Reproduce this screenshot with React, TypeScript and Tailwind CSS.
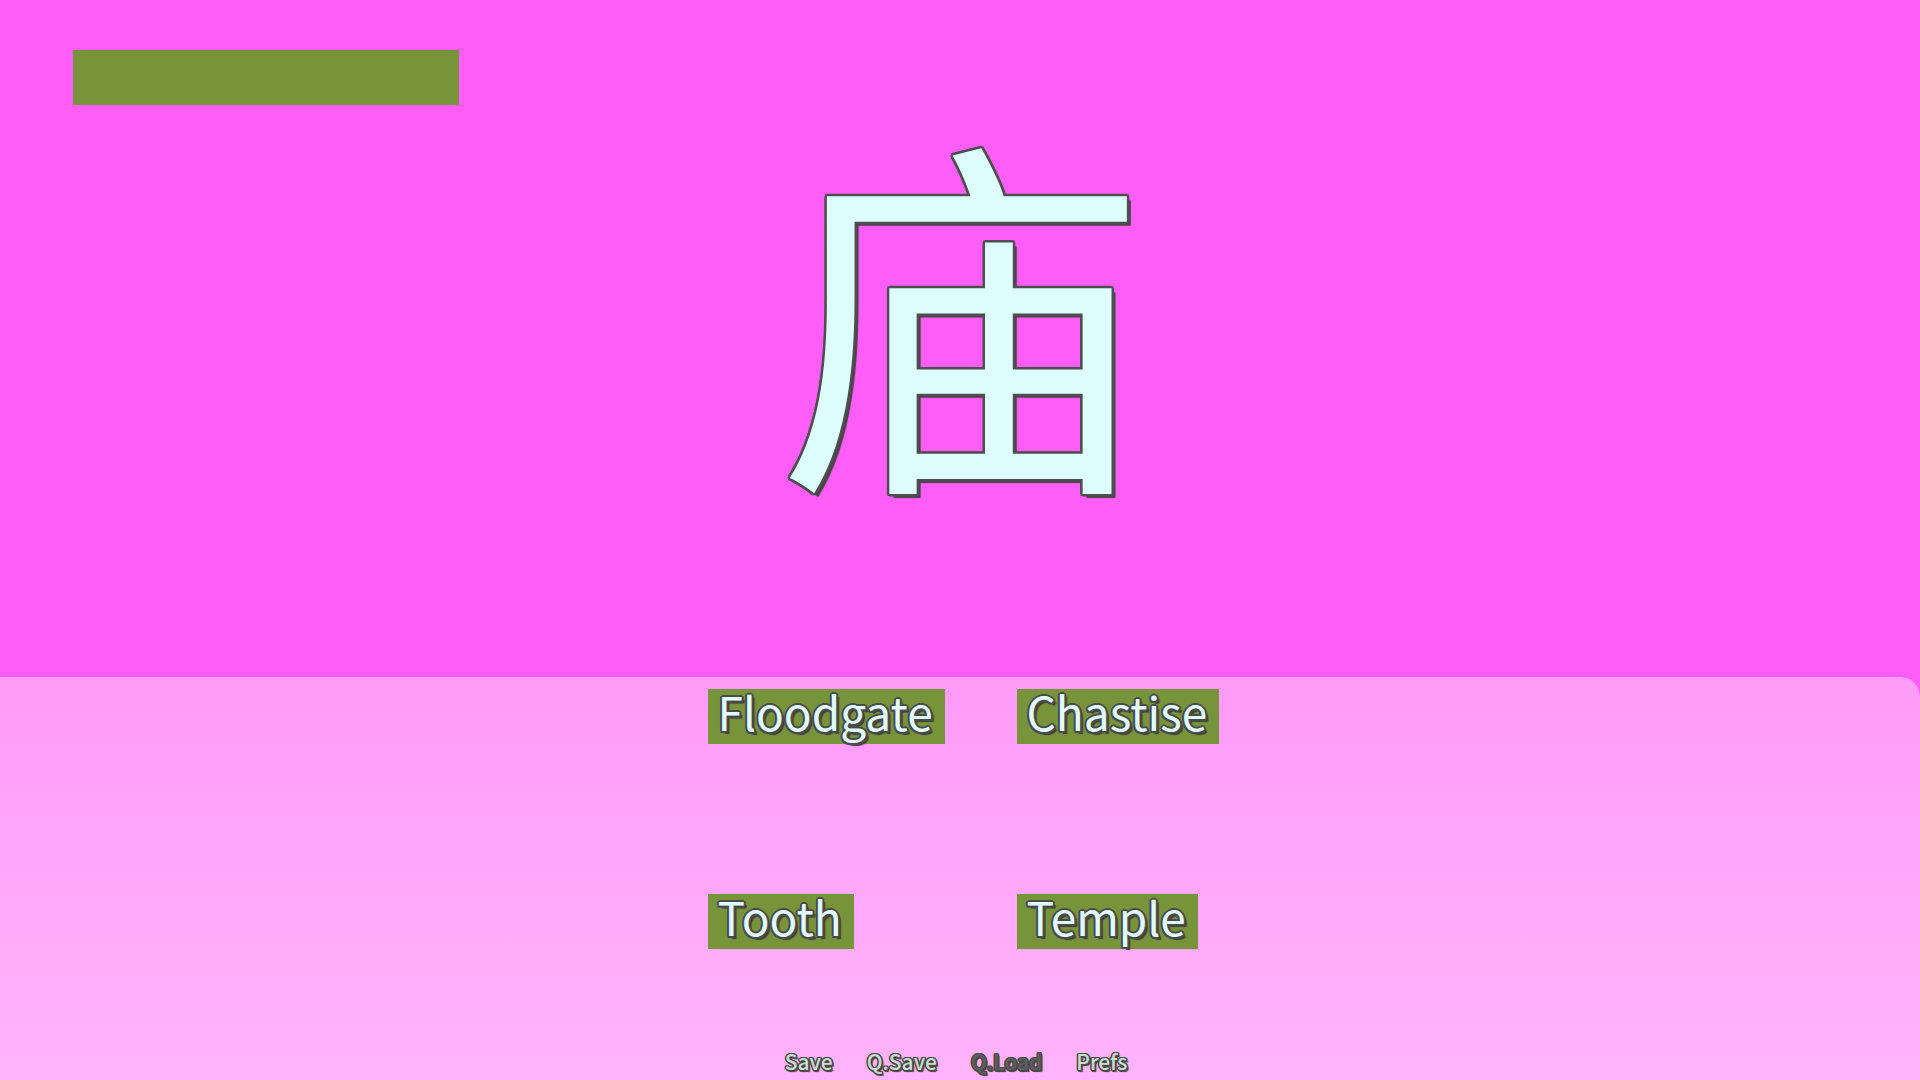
import React from "react";

function Choice({ label }: { label: string }) {
  return (
    <div className="justify-self-start bg-[#77943a] h-[55px] pl-[10px] pr-[12px] text-[46px] leading-[44px] text-[#e0fbfb] [text-shadow:-2px_0_0_#4a4a4a,2px_0_0_#4a4a4a,0_-2px_0_#4a4a4a,0_2px_0_#4a4a4a,-1.5px_-1.5px_0_#4a4a4a,1.5px_-1.5px_0_#4a4a4a,-1.5px_1.5px_0_#4a4a4a,1.5px_1.5px_0_#4a4a4a,3px_3px_1px_#3e3e3e]">
      {label}
    </div>
  );
}

function Quick({ label, dim }: { label: string; dim?: boolean }) {
  return (
    <span
      className={
        (dim ? "text-[#5e5e5e] " : "text-[#c9ddd1] ") +
        "text-[21px] leading-[21px] font-medium [text-shadow:-1.5px_0_0_#4a4a4a,1.5px_0_0_#4a4a4a,0_-1.5px_0_#4a4a4a,0_1.5px_0_#4a4a4a,-1px_-1px_0_#4a4a4a,1px_-1px_0_#4a4a4a,-1px_1px_0_#4a4a4a,1px_1px_0_#4a4a4a,2px_2px_1px_#3e3e3e]"
      }
    >
      {label}
    </span>
  );
}

export default function App() {
  return (
    <div className="w-[1920px] h-[1080px] overflow-hidden bg-[#ff5df8] flex flex-col font-['Noto_Sans_CJK_JP',sans-serif]">
      <div className="h-[677px] flex flex-col">
        <div className="ml-[73px] mt-[50px] w-[386px] h-[55px] bg-[#77943a]" />
        <div className="flex justify-center mt-[9px]">
          <span className="font-['Noto_Sans_CJK_SC',sans-serif] text-[374px] leading-none text-[#ddfdfd] [text-shadow:-2.5px_0_0_#4e4e4e,2.5px_0_0_#4e4e4e,0_-2.5px_0_#4e4e4e,0_2.5px_0_#4e4e4e,-2px_-2px_0_#4e4e4e,2px_-2px_0_#4e4e4e,-2px_2px_0_#4e4e4e,2px_2px_0_#4e4e4e,4px_4px_1px_#444444]">
            庙
          </span>
        </div>
      </div>
      <div className="flex-1 flex flex-col rounded-tr-[20px] bg-gradient-to-b from-[#ff9af9] to-[#ffb4fb]">
        <div className="flex justify-center pt-[12px]">
          <div className="grid grid-cols-[309px_196px] gap-y-[150px]">
            <Choice label="Floodgate" />
            <Choice label="Chastise" />
            <Choice label="Tooth" />
            <Choice label="Temple" />
          </div>
        </div>
        <div className="mt-auto pb-[8px] pr-[8px] flex justify-center gap-[34px]">
          <Quick label="Save" />
          <Quick label="Q.Save" />
          <Quick label="Q.Load" dim />
          <Quick label="Prefs" />
        </div>
      </div>
    </div>
  );
}
